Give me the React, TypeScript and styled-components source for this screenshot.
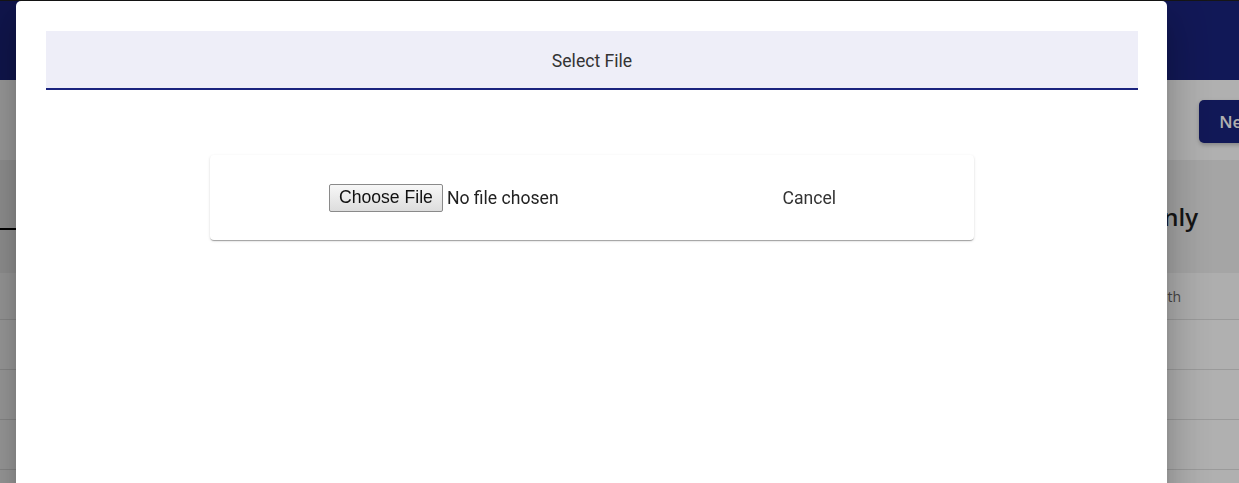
import styled, { createGlobalStyle } from "styled-components";

const GlobalStyle = createGlobalStyle`
  * {
    box-sizing: border-box;
  }

  html,
  body {
    margin: 0;
    padding: 0;
    overflow: hidden;
    background: #fff;
    font-family: Roboto, "Liberation Sans", sans-serif;
  }
`;

const Page = styled.div`
  width: 100%;
  min-height: 483px;
  display: flex;
  flex-direction: column;
`;

const TopBar = styled.header`
  height: 80px;
  background-color: #1a237e;
`;

const Toolbar = styled.div`
  height: 80px;
  display: flex;
  justify-content: flex-end;
  align-items: flex-start;
  padding-top: 20px;
  margin-right: -70px;
`;

const NewButton = styled.button`
  height: 43px;
  padding: 0 20px;
  border: none;
  border-radius: 5px;
  background-color: #1a237e;
  color: #fff;
  font-family: "Open Sans", sans-serif;
  font-size: 17px;
  font-weight: 600;
  box-shadow: 0 2px 4px rgba(0, 0, 0, 0.25);
`;

const Section = styled.section`
  height: 113px;
  display: flex;
  justify-content: space-between;
  align-items: flex-start;
  padding-right: 41px;
  background-color: #efefef;
`;

const Tab = styled.div`
  margin-top: 38px;
  width: 120px;
  height: 32px;
  border-bottom: 2px solid #000;
`;

const Title = styled.h2`
  margin: 41px 0 0;
  line-height: 32px;
  font-family: "Open Sans", sans-serif;
  font-size: 24px;
  font-weight: 600;
  color: #1e1e1e;
`;

const TableHead = styled.div`
  height: 47px;
  display: flex;
  justify-content: flex-end;
  align-items: center;
  padding-right: 58px;
  border-bottom: 1px solid #e0e0e0;
  background-color: #fcfcfc;
  font-family: "Open Sans", sans-serif;
  font-size: 14px;
  color: #666;
`;

const TableRow = styled.div`
  height: 50px;
  border-bottom: 1px solid #e0e0e0;
`;

const Backdrop = styled.div`
  position: fixed;
  inset: 0;
  border-top: 1px solid #161616;
  background: linear-gradient(
    to right,
    rgba(0, 0, 0, 0.4),
    rgba(0, 0, 0, 0.31)
  );
`;

const Dialog = styled.div`
  position: fixed;
  top: 1px;
  left: 16px;
  width: 1151px;
  height: 600px;
  padding: 30px 29px 30px 30px;
  border-radius: 5px;
  background-color: #fff;
  box-shadow: 0 11px 15px -7px rgba(0, 0, 0, 0.2),
    0 24px 38px 3px rgba(0, 0, 0, 0.14), 0 9px 46px 8px rgba(0, 0, 0, 0.12);
`;

const DialogHeader = styled.div`
  height: 59px;
  display: flex;
  justify-content: center;
  align-items: center;
  padding-top: 3px;
  background-color: #eeeef8;
  border-bottom: 2px solid #1a237e;
  font-size: 17.6px;
  color: #333;
`;

const UploadCard = styled.div`
  width: 764px;
  height: 85px;
  margin: 65px 0 0 164px;
  display: flex;
  align-items: center;
  padding-left: 119px;
  padding-right: 130px;
  border-radius: 4px;
  background-color: #fff;
  box-shadow: 0 2px 1px -1px rgba(0, 0, 0, 0.2), 0 1px 1px 0 rgba(0, 0, 0, 0.14),
    0 1px 3px 0 rgba(0, 0, 0, 0.12);
`;

const FileInput = styled.input`
  font-family: Roboto, sans-serif;
  font-size: 17.6px;
  color: #222;

  &::file-selector-button {
    height: 28px;
    margin-right: 4px;
    padding: 0 9px;
    border: 1px solid #8a8a8a;
    border-radius: 2px;
    background: linear-gradient(#f7f7f7, #dddddd);
    font-family: "Liberation Sans", Arial, sans-serif;
    font-size: 17.6px;
    color: #111;
  }
`;

const CancelButton = styled.button`
  margin-left: auto;
  padding: 6px 8px;
  border: none;
  background: none;
  font-family: Roboto, sans-serif;
  font-size: 17.6px;
  color: #333;
  cursor: pointer;
`;

export default function App() {
  return (
    <>
      <GlobalStyle />
      <Page>
        <TopBar />
        <Toolbar>
          <NewButton>New File</NewButton>
        </Toolbar>
        <Section>
          <Tab />
          <Title>Files for Admin Only</Title>
        </Section>
        <TableHead>Month</TableHead>
        <TableRow />
        <TableRow />
        <TableRow />
      </Page>
      <Backdrop />
      <Dialog>
        <DialogHeader>Select File</DialogHeader>
        <UploadCard>
          <FileInput type="file" />
          <CancelButton>Cancel</CancelButton>
        </UploadCard>
      </Dialog>
    </>
  );
}
